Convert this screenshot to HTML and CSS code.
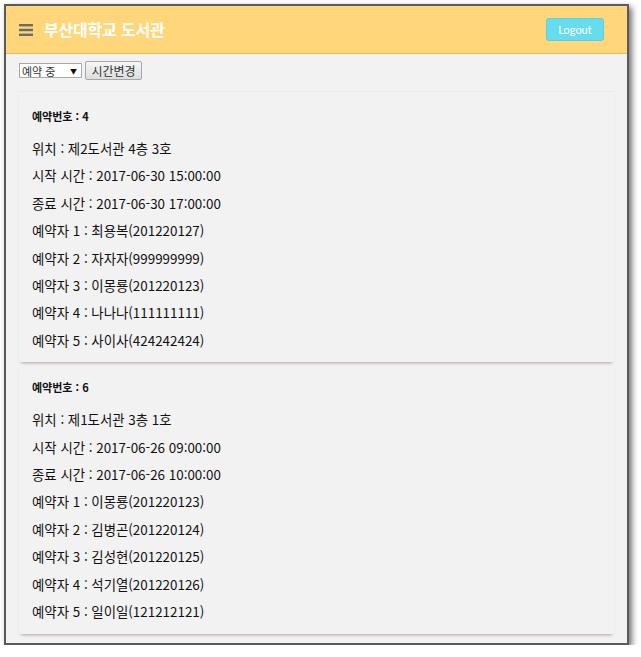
FILE: index.html
```html
<!DOCTYPE html>
<html lang="ko">
<head>
    <meta charset="UTF-8">
    <meta name="viewport" content="width=device-width, initial-scale=1.0">
    <title>부산대학교 도서관</title>
    <link rel="stylesheet" href="styles.css">
</head>
<body>
    <div class="window">
        <header class="topbar">
            <div class="brand">
                <svg class="menu-icon" width="14" height="12" viewBox="0 0 14 12">
                    <rect x="0" y="0" width="14" height="2.4" fill="#6b6b6b"/>
                    <rect x="0" y="4.8" width="14" height="2.4" fill="#6b6b6b"/>
                    <rect x="0" y="9.6" width="14" height="2.4" fill="#6b6b6b"/>
                </svg>
                <span class="brand-title">부산대학교 도서관</span>
            </div>
            <button class="logout">Logout</button>
        </header>

        <div class="toolbar">
            <div class="status">
                <span>예약 중</span>
                <span class="arrow">▼</span>
            </div>
            <button class="change-btn">시간변경</button>
        </div>

        <div class="card">
            <p class="card-no">예약번호 : 4</p>
            <p>위치 : 제2도서관 4층 3호</p>
            <p>시작 시간 : 2017-06-30 15:00:00</p>
            <p>종료 시간 : 2017-06-30 17:00:00</p>
            <p>예약자 1 : 최용복(201220127)</p>
            <p>예약자 2 : 자자자(999999999)</p>
            <p>예약자 3 : 이몽룡(201220123)</p>
            <p>예약자 4 : 나나나(111111111)</p>
            <p>예약자 5 : 사이사(424242424)</p>
        </div>

        <div class="card">
            <p class="card-no">예약번호 : 6</p>
            <p>위치 : 제1도서관 3층 1호</p>
            <p>시작 시간 : 2017-06-26 09:00:00</p>
            <p>종료 시간 : 2017-06-26 10:00:00</p>
            <p>예약자 1 : 이몽룡(201220123)</p>
            <p>예약자 2 : 김병곤(201220124)</p>
            <p>예약자 3 : 김성현(201220125)</p>
            <p>예약자 4 : 석기열(201220126)</p>
            <p>예약자 5 : 일이일(121212121)</p>
        </div>
    </div>
</body>
</html>
```

FILE: styles.css
```css
* {
    margin: 0;
    padding: 0;
    box-sizing: border-box;
}

body {
    background: #ffffff;
    font-family: 'Noto Sans CJK KR', 'Noto Sans', sans-serif;
    color: #111111;
}

.window {
    margin: 4px 0 0 4px;
    width: 625px;
    height: 641px;
    border: 2px solid #5a5a5a;
    background: #f2f2f2;
    box-shadow: 3px 3px 6px rgba(0, 0, 0, 0.55);
    overflow: hidden;
}

.topbar {
    height: 48px;
    background: #ffd679;
    border-bottom: 1px solid #e2b95e;
    display: flex;
    align-items: center;
    justify-content: space-between;
    padding: 0 23px 0 13px;
}

.brand {
    display: flex;
    align-items: center;
    gap: 11px;
    margin-top: -2px;
}

.menu-icon {
    display: block;
    margin-top: 3px;
}

.brand-title {
    color: #ffffff;
    font-size: 16px;
    font-weight: bold;
    letter-spacing: -0.2px;
}

.logout {
    width: 58px;
    height: 23px;
    background: #66dcee;
    border: 1px solid #5ccfe0;
    border-radius: 3px;
    color: #ffffff;
    font-family: 'Lato', 'Noto Sans', sans-serif;
    font-size: 11px;
    font-weight: normal;
}

.toolbar {
    display: flex;
    align-items: center;
    gap: 3px;
    padding: 7px 13px 0;
}

.status {
    width: 63px;
    height: 15px;
    display: flex;
    align-items: center;
    justify-content: space-between;
    padding: 0 4px 0 2px;
    font-size: 11px;
    color: #333333;
    background: #ffffff;
    border: 1px solid #a9a9a9;
}

.status .arrow {
    font-size: 7px;
    color: #111111;
}

.change-btn {
    height: 19px;
    width: 57px;
    font-size: 12px;
    font-family: 'Noto Sans CJK KR', sans-serif;
    color: #333333;
    background: linear-gradient(#f6f6f6, #dedede);
    border: 1px solid #a6a6a6;
    border-radius: 2px;
}

.card {
    margin: 11px 13px 0;
    padding: 14px 13px 8px;
    border-top: 1px solid #ebebeb;
    box-shadow: 0 3px 3px -2px rgba(130, 95, 100, 0.55);
    display: flex;
    flex-direction: column;
}

.card + .card {
    margin-top: 1px;
    border-top: none;
}

.card p {
    font-size: 13.4px;
    line-height: 27.4px;
}

.card .card-no {
    font-size: 11px;
    font-weight: bold;
    line-height: 20px;
    margin-bottom: 9px;
}
```
